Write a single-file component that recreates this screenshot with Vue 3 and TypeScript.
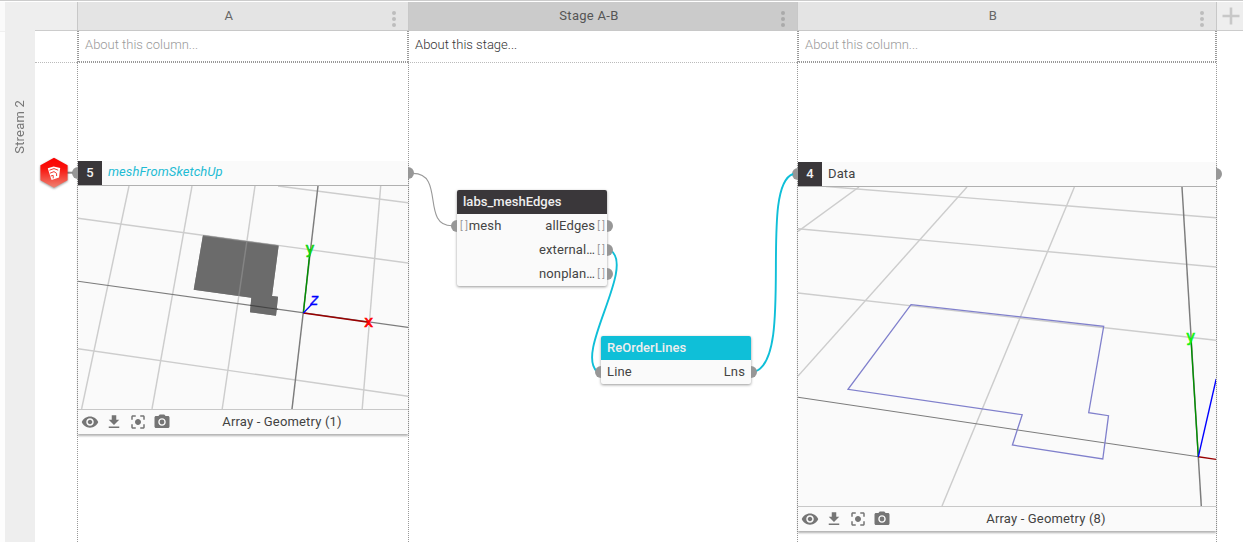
<script setup lang="ts">
type Pt = [number, number]
interface Seg { a: Pt; b: Pt; c: string; w?: number }
interface Axis { t: string; x: number; y: number; c: string; i?: boolean }
interface Scene { box: string; height: number; back: Seg[]; mesh?: string; outline?: string; front: Seg[]; labels: Axis[] }
interface Panel { key: string; num: number; title: string; linked: boolean; info: string; scene: Scene }

const LIGHT = '#cdcdcd'
const DARK = '#7c7c7c'

const panelA: Panel = {
  key: 'a', num: 5, title: 'meshFromSketchUp', linked: true, info: 'Array - Geometry (1)',
  scene: {
    box: '78 186 330 223', height: 223,
    mesh: '203,235 278.7,245.3 272,296 278,296.7 276,315.7 250,312.3 251.3,297.7 193.7,289.7',
    back: [],
    front: [
      { a: [129, 186], b: [81.6, 409], c: LIGHT }, { a: [192, 186], b: [152, 409], c: LIGHT },
      { a: [255, 186], b: [222.2, 409], c: LIGHT }, { a: [380.7, 186], b: [362.2, 409], c: LIGHT },
      { a: [278, 186], b: [408, 202.7], c: LIGHT }, { a: [78, 218.3], b: [408, 263], c: LIGHT },
      { a: [78, 348.7], b: [408, 396.3], c: LIGHT },
      { a: [318, 186], b: [292, 409], c: DARK }, { a: [78, 281.2], b: [408, 327.4], c: DARK, w: 1.1 },
      { a: [303.4, 313], b: [310.2, 249], c: '#008f00', w: 1.4 },
      { a: [303.4, 313], b: [368.6, 322.3], c: '#990000', w: 1.4 },
      { a: [303.4, 313], b: [312, 304], c: '#0000ff', w: 1.3 },
    ],
    labels: [
      { t: 'y', x: 310, y: 253.5, c: '#11d411' }, { t: 'x', x: 368.8, y: 326.7, c: '#ff0000' },
      { t: 'z', x: 314.2, y: 304.7, c: '#0000ff', i: true },
    ],
  },
}

const panelB: Panel = {
  key: 'b', num: 4, title: 'Data', linked: false, info: 'Array - Geometry (8)',
  scene: {
    box: '798 187 418 319', height: 319,
    outline: '911,304.7 1103.7,326.3 1088.7,412.7 1108.5,415.7 1102.8,459 1012.4,445 1022.2,414.7 848,389.3',
    back: [
      { a: [826, 186.5], b: [1216, 217.7], c: LIGHT }, { a: [798, 228.7], b: [1216, 267], c: LIGHT },
      { a: [798, 293], b: [1216, 340.3], c: LIGHT }, { a: [859, 187], b: [798, 231.3], c: LIGHT },
      { a: [967, 187], b: [798, 376], c: LIGHT }, { a: [1074.4, 187], b: [942, 506], c: LIGHT },
      { a: [798, 397.3], b: [1198.3, 456.8], c: DARK, w: 1.1 }, { a: [1182, 187], b: [1198.3, 456.8], c: DARK },
      { a: [1198.3, 456.8], b: [1201.3, 506], c: DARK },
    ],
    front: [
      { a: [1198.3, 456.8], b: [1190.9, 338], c: '#008f00', w: 1.4 },
      { a: [1198.3, 456.8], b: [1216.2, 459.4], c: '#990000', w: 1.4 },
      { a: [1198.3, 456.8], b: [1216.2, 379], c: '#0000ff', w: 1.4 },
    ],
    labels: [{ t: 'y', x: 1190.8, y: 342, c: '#11f411' }],
  },
}

const columns = [
  { name: 'A', note: 'About this column...', stage: false, panel: panelA },
  { name: 'Stage A-B', note: 'About this stage...', stage: true, panel: null },
  { name: 'B', note: 'About this column...', stage: false, panel: panelB },
]

const outputs = ['allEdges', 'external…', 'nonplan…']

const tools = [
  'M12 4.5C7 4.5 2.73 7.61 1 12c1.73 4.39 6 7.5 11 7.5s9.27-3.11 11-7.5c-1.73-4.39-6-7.5-11-7.5zM12 17c-2.76 0-5-2.24-5-5s2.24-5 5-5 5 2.24 5 5-2.24 5-5 5zm0-8c-1.66 0-3 1.34-3 3s1.34 3 3 3 3-1.34 3-3-1.34-3-3-3z',
  'M19 9h-4V3H9v6H5l7 7 7-7zM5 18v2h14v-2H5z',
  'M12 8c-2.21 0-4 1.79-4 4s1.79 4 4 4 4-1.79 4-4-1.79-4-4-4zm-7 7H3v4c0 1.1.9 2 2 2h4v-2H5v-4zM5 5h4V3H5c-1.1 0-2 .9-2 2v4h2V5zm14-2h-4v2h4v4h2V5c0-1.1-.9-2-2-2zm0 16h-4v2h4c1.1 0 2-.9 2-2v-4h-2v4z',
  'M9 2L7.17 4H4c-1.1 0-2 .9-2 2v12c0 1.1.9 2 2 2h16c1.1 0 2-.9 2-2V6c0-1.1-.9-2-2-2h-3.17L15 2H9zm3 15c-2.76 0-5-2.24-5-5s2.24-5 5-5 5 2.24 5 5-2.24 5-5 5zM12 8.8a3.2 3.2 0 1 0 0 6.4 3.2 3.2 0 0 0 0-6.4z',
]
</script>

<template>
  <div class="sheet">
    <div class="edge"></div>
    <aside class="rail"><span class="rail-name">Stream 2</span></aside>
    <section class="gutter">
      <div class="gutter-head"></div>
      <div class="gutter-note"></div>
    </section>

    <section v-for="col in columns" :key="col.name" class="col" :class="{ stage: col.stage }">
      <header class="head">
        <span>{{ col.name }}</span>
        <i class="dots"><b></b><b></b><b></b></i>
      </header>
      <div class="body">
        <div class="note"><div class="note-in">{{ col.note }}</div></div>
        <article v-if="col.panel" class="panel" :class="col.panel.key">
          <i class="port in"></i><i class="port out"></i>
          <div class="panel-head">
            <span class="num">{{ col.panel.num }}</span>
            <span class="title" :class="{ linked: col.panel.linked }">{{ col.panel.title }}</span>
          </div>
          <svg class="scene" :viewBox="col.panel.scene.box" :height="col.panel.scene.height">
            <polygon v-if="col.panel.scene.mesh" :points="col.panel.scene.mesh" fill="#6b6b6b" />
            <line v-for="(s, i) in col.panel.scene.back" :key="'k' + i" :x1="s.a[0]" :y1="s.a[1]" :x2="s.b[0]" :y2="s.b[1]" :stroke="s.c" :stroke-width="s.w ?? 1.45" />
            <polygon v-if="col.panel.scene.outline" :points="col.panel.scene.outline" fill="none" stroke="#8080cc" stroke-width="1.3" />
            <line v-for="(s, i) in col.panel.scene.front" :key="'f' + i" :x1="s.a[0]" :y1="s.a[1]" :x2="s.b[0]" :y2="s.b[1]" :stroke="s.c" :stroke-width="s.w ?? 1.45" />
            <template v-if="col.panel.scene.mesh">
              <polygon :points="col.panel.scene.mesh" fill="#6b6b6b" fill-opacity="0.75" />
              <line x1="250" y1="305.3" x2="278" y2="309.2" stroke="#444" stroke-width="1.1" />
            </template>
            <text v-for="l in col.panel.scene.labels" :key="l.t" class="axis" :class="{ slant: l.i }" :x="l.x" :y="l.y" :fill="l.c" :stroke="l.c">{{ l.t }}</text>
          </svg>
          <footer class="panel-foot">
            <span v-for="(d, i) in tools" :key="i" class="tool"><svg viewBox="0 0 24 24" width="18" height="18"><path :d="d" fill="#757575" fill-rule="evenodd" /></svg></span>
            <span class="info">{{ col.panel.info }}</span>
          </footer>
        </article>
      </div>
    </section>

    <section class="add">
      <div class="add-head">
        <svg width="18" height="18" viewBox="0 0 18 18"><path d="M9 .5v17M.5 9h17" stroke="#c8c8c8" stroke-width="2.6" /></svg>
      </div>
      <div class="add-body"></div>
    </section>

    <svg class="wires" width="1243" height="542" viewBox="0 0 1243 542" fill="none">
      <path d="M67 172.7H73" stroke="#8c8c8c" stroke-width="2" />
      <path d="M413 173.4C445 173.4 421 225.8 452 225.8" stroke="#999" stroke-width="1.1" />
      <path d="M611 250.5C635 268 575 352 597 371.5" stroke="#0fbfd8" stroke-width="1.9" />
      <path d="M755 371.5C795 358 758 186 793 174" stroke="#0fbfd8" stroke-width="1.9" />
    </svg>

    <article class="node mesh-edges">
      <h3>labs_meshEdges</h3>
      <div v-for="(o, i) in outputs" :key="o" class="row">
        <template v-if="i === 0"><i class="port in"></i><em>[ ]</em><span class="lab">mesh</span></template>
        <span class="fill"></span>
        <span>{{ o }}</span><em class="r">[ ]</em><i class="port out"></i>
      </div>
    </article>

    <article class="node reorder">
      <h3>ReOrderLines</h3>
      <div class="row plain">
        <i class="port in"></i><span>Line</span><span class="fill"></span><span>Lns</span><i class="port out"></i>
      </div>
    </article>

    <svg class="source" width="34" height="38" viewBox="37 154 34 38">
      <defs>
        <linearGradient id="hex" x1="0" y1="0" x2="0" y2="1">
          <stop offset="0" stop-color="#fb0000" /><stop offset=".35" stop-color="#f9120c" /><stop offset="1" stop-color="#ee8272" />
        </linearGradient>
      </defs>
      <path d="M54 157.7L67.6 165.2V180.2L54 187.7L40.4 180.2V165.2Z" fill="url(#hex)" />
      <path d="M47.8 168.2L53.6 166.4L60.2 168L59 177.4L51.6 180L50 175.6Z" fill="#fff" />
      <path d="M49.4 170.2L54 168.6L58.2 170.2M50 173.2L54 171.6L56.6 173.4V176M50.6 176L53.2 175.4V178.4" fill="none" stroke="#f23a32" stroke-width="1" />
    </svg>
  </div>
</template>

<style>
html, body { margin: 0; background: #fff; overflow: hidden; }
</style>

<style scoped>
.sheet {
  position: relative; box-sizing: border-box; width: 1243px; height: 542px; overflow: hidden;
  display: grid; grid-template-columns: 5px 30px 42px 331px 389px 419px 27px;
  border-top: 1px solid #ccc; padding-top: 1px; background: #fff;
  font-family: Roboto, "Liberation Sans", sans-serif; font-size: 13px; letter-spacing: 0.13px; color: #444;
}
.edge { background: linear-gradient(#fafafa 29px, #f0f0f0 29px, #f0f0f0 30px, #fdfdfd 30px); }
.rail { background: #eee; display: flex; justify-content: center; align-items: flex-start; padding-top: 98px; }
.rail-name { writing-mode: vertical-rl; transform: rotate(180deg); line-height: 30px; font-size: 13px; letter-spacing: 0.2px; color: #777; }
.gutter-head { height: 28px; background: #eee; border-bottom: 1px solid #ccc; }
.gutter-note { height: 31px; border-bottom: 1px dotted #bbb; }
.col { display: flex; flex-direction: column; min-width: 0; }
.head {
  position: relative; height: 28px; border-bottom: 1px solid #c8c8c8; border-left: 1px solid #c8c8c8;
  background: #e4e4e4; display: flex; align-items: center; justify-content: center;
  padding-right: 28px; line-height: 15px; letter-spacing: 0.3px; color: #666; box-sizing: content-box;
}
.head span { margin-top: -1px; }
.stage .head { background: #cbcbcb; border-color: #c8c8c8; color: #555; }
.dots { position: absolute; right: 12px; top: 9px; display: flex; flex-direction: column; gap: 2px; }
.dots b { width: 4px; height: 4px; border-radius: 50%; background: #bdbdbd; }
.stage .dots b { background: #aaa; }
.body { flex: 1; border-left: 1px dotted #999; }
.note { height: 31px; margin-left: -1px; padding-left: 1px; border-bottom: 1px dotted #999; }
.note-in {
  box-sizing: border-box; height: 31px; border: 1px dotted #999; border-top: 0;
  padding-left: 6px; line-height: 28px; font-weight: 300; letter-spacing: 0; color: #999;
}
.stage .note { border-color: #bbb; }
.stage .note-in { border-color: transparent; color: #333; padding-left: 5px; }

.panel { position: relative; background: #fafafa; box-shadow: 0 2px 2px rgba(0, 0, 0, 0.3); clip-path: inset(-10px -8px -8px -8px); }
.panel.a { margin-top: 98px; }
.panel.b { margin-top: 99px; }
.panel-head { display: flex; height: 24px; line-height: 24px; border-bottom: 1px solid #b0b0b0; }
.num { width: 24px; background: #3a373a; color: #f2f2f2; text-align: center; font-weight: 500; }
.title { padding-left: 6px; line-height: 23px; color: #424242; }
.title.linked { font-style: italic; color: #1fbcd4; line-height: 22px; letter-spacing: 0.06px; }
.scene { display: block; width: 100%; background: #fafafa; }
.axis { font: 15px "DejaVu Sans", sans-serif; text-anchor: middle; letter-spacing: 0; stroke-width: 0.7px; }
.axis.slant { font-style: oblique; stroke-width: 0.3px; }
.panel-foot { display: flex; align-items: center; height: 24px; border-top: 1px solid #c8c8c8; }
.tool { width: 24px; height: 18px; display: flex; justify-content: center; }
.tool svg { display: block; }
.info { flex: 1; margin-right: 18px; margin-top: -2px; text-align: center; letter-spacing: 0.17px; color: #424242; }

.port { position: absolute; width: 6px; height: 12px; background: #979797; top: 6px; }
.port.in { left: -6px; border-radius: 6px 0 0 6px; }
.port.out { right: -6px; border-radius: 0 6px 6px 0; }

.add-head { height: 28px; border-left: 1px solid #c8c8c8; border-bottom: 1px solid #ccc; background: #eee; display: flex; align-items: center; justify-content: center; padding-left: 2px; }
.add-body { height: 511px; border-left: 1px dotted #999; }

.wires { position: absolute; left: 0; top: -1px; }
.source { position: absolute; left: 37px; top: 153px; filter: drop-shadow(0 1px 1px rgba(0, 0, 0, 0.4)); }
.node { position: absolute; width: 150px; background: #fafafa; border-radius: 2px; box-shadow: 0 1px 3px rgba(0, 0, 0, 0.4); }
.mesh-edges { left: 457px; top: 189px; }
.reorder { left: 601px; top: 335px; }
.node h3 { margin: 0; height: 24px; line-height: 23px; padding-left: 6px; font-size: 13px; font-weight: 500; letter-spacing: 0.04px; color: #eee; background: #3a373a; border-radius: 2px 2px 0 0; }
.reorder h3 { background: #0fbfd8; }
.row { position: relative; display: flex; height: 24px; line-height: 23px; padding: 0 2px 0 3px; }
.row.plain { padding: 0 6px; }
.row em { font-style: normal; font-size: 10px; color: #999; letter-spacing: 0; }
.row em.r { padding-left: 2px; }
.lab { padding-left: 1px; }
.fill { flex: 1; }
</style>
